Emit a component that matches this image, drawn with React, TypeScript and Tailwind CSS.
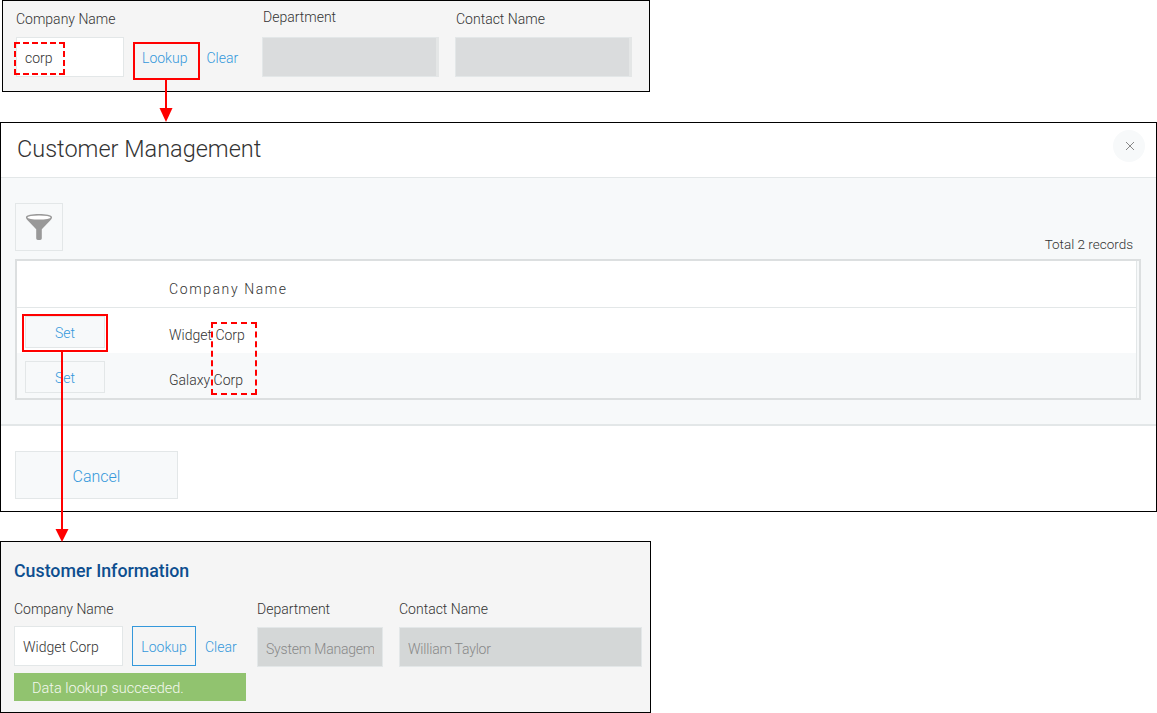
function Funnel() {
  return (
    <svg width="28" height="28" viewBox="0 0 30 30" aria-hidden="true">
      <path d="M1 4.500C1 2 8 1 15 1s14 1 14 3.500c0 1-1 2.500-2 3.500L18 17.500V27c0 1.500-1.500 2-3 2s-3-.5-3-2V17.500L3 8C2 7 1 5.500 1 4.500z" fill="#999" />
      <ellipse cx="15" cy="4.800" rx="12.500" ry="2.200" fill="#fff" />
    </svg>
  );
}

function ReadOnlyBox({ width, value }: { width: string; value: string }) {
  return (
    <div className={`${width} h-10 border border-[#e3e7e8] bg-[#d4d7d7] px-2 pt-[4px] flex items-center whitespace-nowrap text-[14px] tracking-[-0.2px] text-[#888]`}>
      <span className="block w-full overflow-hidden">{value}</span>
    </div>
  );
}

function EmptyBox({ width }: { width: string }) {
  return <div className={`${width} h-10 bg-[#dadcdd] border-y border-l border-[#e3e7e8] border-r-[3px] border-r-[#e4e6e6]`} />;
}

function TopPanel() {
  return (
    <section className="ml-[2px] w-[648px] h-[92px] border border-black bg-[#f5f5f5] flex pl-[13px] text-[#333]">
      <div className="w-[246px]">
        <div className="h-[36px] pt-[10px] text-[14px] leading-[16px]">Company Name</div>
        <div className="flex items-center">
          <div className="w-[108px] h-10 border border-[#e3e7e8] bg-white pl-[8px] pt-[2px] flex items-center text-[14px] leading-[20px]">corp</div>
          <span className="ml-[18px] pt-[2px] text-[14px] text-[#3498db]">Lookup</span>
          <span className="ml-[19px] pt-[2px] text-[14px] text-[#3498db]">Clear</span>
        </div>
      </div>
      <div className="w-[193px] pl-[1px]">
        <div className="h-[36px] pt-[8px] text-[14px] leading-[16px]">Department</div>
        <div className="-ml-[1px]"><EmptyBox width="w-[177px]" /></div>
      </div>
      <div className="pl-[1px]">
        <div className="h-[36px] pt-[10px] text-[14px] leading-[16px]">Contact Name</div>
        <div className="-ml-[1px]"><EmptyBox width="w-[177px]" /></div>
      </div>
    </section>
  );
}

function SetButton() {
  return (
    <div className="w-20 h-8 border border-[#e3e7e8] bg-[#f7f9fa] pt-[2px] flex items-center justify-center text-[14px] text-[#3498db]">Set</div>
  );
}

function Dialog() {
  return (
    <section className="mt-[30px] w-[1157px] h-[390px] border border-black bg-white flex flex-col text-[#333]">
      <header className="h-[55px] shrink-0 flex items-start justify-between pl-4 pr-[11px] border-b border-[#e3e7e8]">
        <h2 className="mt-[11px] text-[23.500px] font-light leading-[30px] text-[#333]">Customer Management</h2>
        <button className="w-8 h-8 mt-[7px] rounded-full bg-[#f7f9fa] flex items-center justify-center">
          <svg width="10" height="10" viewBox="-1 0 10 10" aria-hidden="true">
            <path d="M1 1l8 8M9 1l-8 8" stroke="#888" strokeWidth="1" fill="none" />
          </svg>
        </button>
      </header>
      <div className="h-[248px] shrink-0 bg-[#f7f9fa] border-b-2 border-[#e3e7e8] px-[14px] pt-[25px]">
        <div className="flex justify-between">
          <div className="w-12 h-12 border border-[#e3e7e8] flex items-center justify-center">
            <Funnel />
          </div>
          <div className="self-end mr-[9px] mb-[-1px] text-[13.500px] leading-[16px]">Total 2 records</div>
        </div>
        <div className="mt-2 w-[1126px] h-[141px] border-2 border-[#dcdfe0] pr-[2px]">
          <div className="h-full border-r border-[#e3e7e8]">
            <div className="h-[47px] bg-white border-b border-[#e3e7e8] pl-[152px] pt-[19px] text-[14px] leading-[18px] tracking-[1.600px]">Company Name</div>
            <div className="h-[45px] bg-white flex pl-[8px] pt-[8px]">
              <SetButton />
              <span className="ml-[64px] mt-[10px] text-[14px] leading-[18px]">Widget Corp</span>
            </div>
            <div className="h-[45px] bg-[#f7f9fa] flex pl-[8px] pt-[8px]">
              <SetButton />
              <span className="ml-[64px] mt-[10px] text-[14px] leading-[18px]">Galaxy Corp</span>
            </div>
          </div>
        </div>
      </div>
      <div className="pl-[14px] pt-[25px]">
        <div className="w-[163px] h-12 border border-[#e3e7e8] bg-[#f7f9fa] flex items-center justify-center pt-[3px] text-[16px] text-[#3498db]">Cancel</div>
      </div>
    </section>
  );
}

function ResultPanel() {
  return (
    <section className="mt-[29px] w-[651px] h-[172px] border border-black bg-[#f5f5f5] pl-[13px] text-[#333]">
      <h3 className="mt-[17px] h-[24px] text-[17.800px] leading-[24px] font-medium text-[#0d4e8f]">Customer Information</h3>
      <div className="flex">
        <div className="w-[243px]">
          <div className="h-[43px] pt-[18px] text-[14px] leading-[16px]">Company Name</div>
          <div className="flex items-start">
            <div className="w-[109px] h-10 border border-[#e3e7e8] bg-white pl-2 pt-[3px] flex items-center text-[14px]">Widget Corp</div>
            <div className="ml-[9px] w-[64px] h-10 border border-[#3498db] pt-[3px] flex items-center justify-center text-[14px] text-[#3498db]">Lookup</div>
            <span className="ml-[9px] mt-[11px] text-[14px] leading-[20px] text-[#3498db]">Clear</span>
          </div>
          <div className="mt-[7px] w-[232px] h-[28px] bg-[#91c36f] pl-[18px] pt-[4px] flex items-center text-[14.500px] text-[#f3f8ee]">Data lookup succeeded.</div>
        </div>
        <div className="w-[142px]">
          <div className="h-[44px] pt-[18px] text-[14px] leading-[16px]">Department</div>
          <ReadOnlyBox width="w-[126px]" value="System Management" />
        </div>
        <div>
          <div className="h-[44px] pt-[18px] text-[14px] leading-[16px]">Contact Name</div>
          <ReadOnlyBox width="w-[243px]" value="William Taylor" />
        </div>
      </div>
    </section>
  );
}

function Annotations() {
  return (
    <>
      <div className="absolute left-[14px] top-[42px] w-[51px] h-[33px] border-2 border-dashed border-[#ff0000]" />
      <div className="absolute left-[133px] top-[42px] w-[67px] h-[38px] border-2 border-[#ff0000]" />
      <div className="absolute left-[22px] top-[314px] w-[86px] h-[38px] border-2 border-[#ff0000]" />
      <div className="absolute left-[211px] top-[322px] w-[46px] h-[73px] border-2 border-dashed border-[#ff0000]" />
      <svg className="absolute left-0 top-0 pointer-events-none" width="1157" height="713" aria-hidden="true">
        <path d="M166 80V110" stroke="#ff0000" strokeWidth="2" fill="none" />
        <path d="M159.500 108H172.500L166 122z" fill="#ff0000" />
        <path d="M62 352V531" stroke="#ff0000" strokeWidth="2" fill="none" />
        <path d="M55.500 529H68.500L62 542z" fill="#ff0000" />
      </svg>
    </>
  );
}

export default function App() {
  return (
    <div className="relative w-[1157px] h-[713px] overflow-hidden bg-white font-['Roboto','Liberation_Sans',sans-serif] font-light">
      <TopPanel />
      <Dialog />
      <ResultPanel />
      <Annotations />
    </div>
  );
}
